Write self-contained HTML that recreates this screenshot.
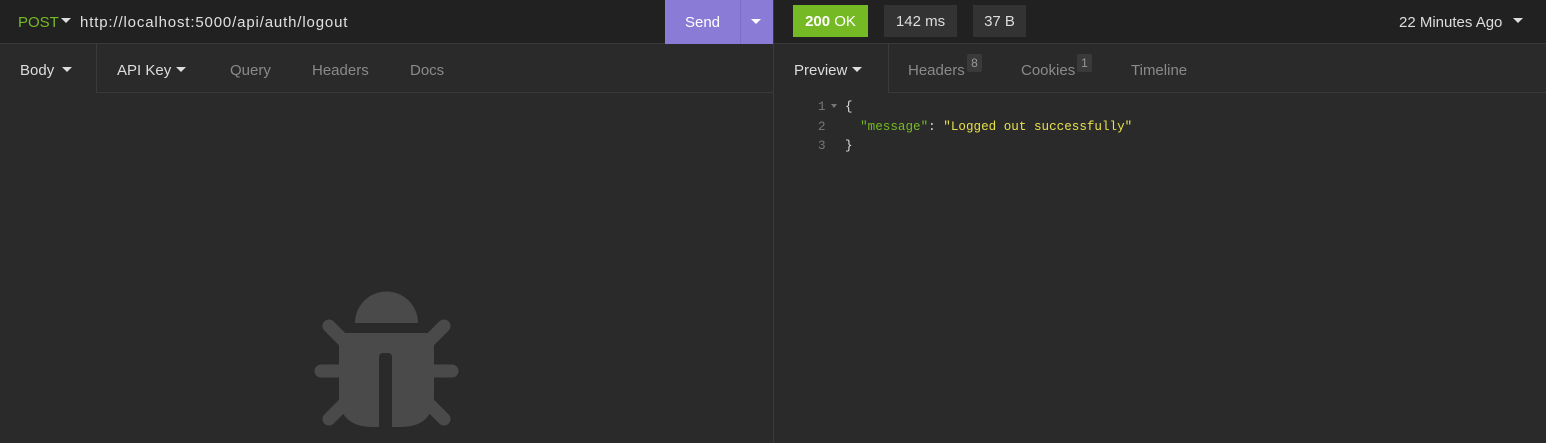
<!DOCTYPE html>
<html><head><style>
*{margin:0;padding:0;box-sizing:border-box}
body{width:1546px;height:443px;background:#2a2a2a;font-family:"Liberation Sans",sans-serif;font-size:15px;color:#ddd;position:relative;overflow:hidden}
.top{position:absolute;left:0;top:0;width:1546px;height:44px;background:#212121;border-bottom:1px solid #3a3a3a}
.abs{position:absolute}
.tri{display:inline-block;width:0;height:0;border-left:5px solid transparent;border-right:5px solid transparent;border-top:5px solid #ddd;vertical-align:middle}
.tab{position:absolute;top:62px;color:#8a8a8a}
.mono{font-family:"Liberation Mono",monospace;font-size:12.6px}
</style></head><body>
<div class="top"></div>
<div class="abs" style="left:18px;top:14px;color:#75ba24">POST</div>
<span class="abs tri" style="left:61px;top:18px"></span>
<div class="abs" style="left:80px;top:14px;color:#e0e0e0;letter-spacing:0.85px">http://localhost:5000/api/auth/logout</div>
<div class="abs" style="left:665px;top:0;width:75px;height:44px;background:#8a7bd6;color:#fff;text-align:center;line-height:46px">Send</div>
<div class="abs" style="left:740px;top:0;width:33px;height:44px;background:#8a7bd6;border-left:1px solid #7c6dc6"></div>
<span class="abs tri" style="left:751px;top:19px;border-top-color:#fff"></span>
<div class="abs" style="left:773px;top:0;width:1px;height:443px;background:#3a3a3a"></div>
<div class="abs" style="left:793px;top:5px;width:75px;height:32px;background:#75ba24;color:#fff;line-height:34px;text-align:center"><b>200</b> OK</div>
<div class="abs" style="left:884px;top:5px;width:73px;height:32px;background:#333;line-height:34px;text-align:center">142 ms</div>
<div class="abs" style="left:973px;top:5px;width:53px;height:32px;background:#333;line-height:34px;text-align:center">37 B</div>
<div class="abs" style="left:1399px;top:14px">22 Minutes Ago</div>
<span class="abs tri" style="left:1513px;top:18px"></span>
<div class="abs" style="left:96px;top:44px;width:677px;height:49px;border-left:1px solid #3a3a3a;border-bottom:1px solid #3a3a3a"></div>
<div class="abs" style="left:888px;top:44px;width:658px;height:49px;border-left:1px solid #3a3a3a;border-bottom:1px solid #3a3a3a"></div>
<div class="tab" style="left:20px;color:#ddd">Body</div><span class="abs tri" style="left:62px;top:67px"></span>
<div class="tab" style="left:117px;color:#ddd">API Key</div><span class="abs tri" style="left:176px;top:67px"></span>
<div class="tab" style="left:230px">Query</div>
<div class="tab" style="left:312px">Headers</div>
<div class="tab" style="left:410px">Docs</div>
<div class="tab" style="left:794px;color:#ddd">Preview</div><span class="abs tri" style="left:852px;top:67px"></span>
<div class="tab" style="left:908px">Headers</div>
<div class="abs" style="left:967px;top:54px;width:15px;height:18px;background:#3a3a3a;color:#999;font-size:12px;text-align:center;line-height:18px;border-radius:2px">8</div>
<div class="tab" style="left:1021px">Cookies</div>
<div class="abs" style="left:1077px;top:54px;width:15px;height:18px;background:#3a3a3a;color:#999;font-size:12px;text-align:center;line-height:18px;border-radius:2px">1</div>
<div class="tab" style="left:1131px">Timeline</div>
<div class="abs mono" style="left:818px;top:98px;color:#777;line-height:19.5px">1<br>2<br>3</div>
<span class="abs" style="left:831px;top:104px;border-left:3px solid transparent;border-right:3px solid transparent;border-top:4px solid #777"></span>
<div class="abs mono" style="left:845px;top:98px;line-height:19.5px;color:#ddd;white-space:pre">{
  <span style="color:#75ba24">"message"</span>: <span style="color:#e8e04a">"Logged out successfully"</span>
}</div>
<svg class="abs" style="left:300px;top:280px" width="170" height="163" viewBox="300 280 170 163">
<g fill="#4a4a4a" stroke="#4a4a4a">
<path d="M355 323 A31.5 31.5 0 0 1 418 323 Z" stroke="none"/>
<path d="M339 333 H434 V395 Q434 427 400 427 H373 Q339 427 339 395 Z" stroke="none"/>
<g stroke-width="13" stroke-linecap="round" fill="none">
<line x1="329" y1="326" x2="350" y2="347"/><line x1="444" y1="326" x2="423" y2="347"/>
<line x1="321" y1="371" x2="345" y2="371"/><line x1="452" y1="371" x2="428" y2="371"/>
<line x1="329" y1="419" x2="350" y2="398"/><line x1="444" y1="419" x2="423" y2="398"/>
</g>
</g>
<rect x="379" y="353" width="13" height="95" rx="4" fill="#2a2a2a"/>
</svg>
</body></html>
